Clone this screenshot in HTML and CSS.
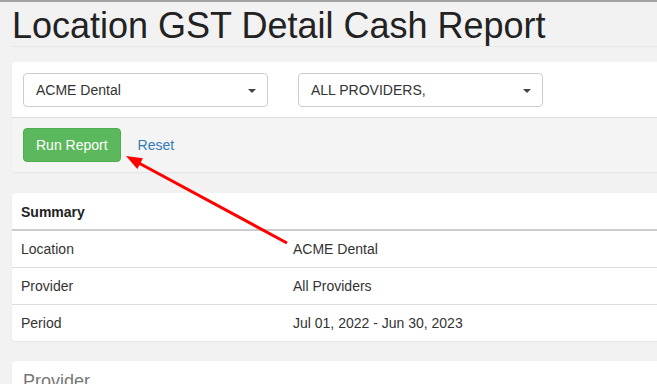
FILE: index.html
```html
<!DOCTYPE html>
<html lang="en">
<head>
    <meta charset="UTF-8">
    <meta name="viewport" content="width=device-width, initial-scale=1.0">
    <title>Location GST Detail Cash Report</title>
    <link rel="stylesheet" href="styles.css">
</head>
<body>
    <div class="page">
        <div class="page-header">
            <h1>Location GST Detail Cash Report</h1>
        </div>

        <div class="panel panel-filters">
            <div class="panel-body filters">
                <div class="select">
                    <span>ACME Dental</span>
                    <span class="caret"></span>
                </div>
                <div class="select">
                    <span>ALL PROVIDERS,</span>
                    <span class="caret"></span>
                </div>
            </div>
            <div class="panel-footer">
                <button class="btn-run">Run Report</button>
                <a href="#" class="reset">Reset</a>
            </div>
        </div>

        <div class="panel">
            <table class="summary">
                <thead>
                    <tr><th class="col-label">Summary</th><th></th></tr>
                </thead>
                <tbody>
                    <tr><td>Location</td><td>ACME Dental</td></tr>
                    <tr><td>Provider</td><td>All Providers</td></tr>
                    <tr><td>Period</td><td>Jul 01, 2022 - Jun 30, 2023</td></tr>
                </tbody>
            </table>
        </div>

        <div class="panel">
            <div class="panel-heading">Provider</div>
            <div class="panel-body">&nbsp;</div>
        </div>
    </div>

    <!-- annotation arrow -->
    <svg class="arrow" width="657" height="384" viewBox="0 0 657 384">
        <line x1="287" y1="243" x2="136" y2="161.5" stroke="#f00" stroke-width="3" />
        <polygon points="126,156 137.3,168.9 142.9,158.3" fill="#f00" />
    </svg>
</body>
</html>
```

FILE: styles.css
```css
html, body {
    margin: 0;
    height: 100%;
    overflow: hidden;
}
body {
    font-family: "Liberation Sans", Arial, sans-serif;
    font-size: 14px;
    line-height: 20px;
    color: #333;
    background: #f2f2f2;
    border-top: 2px solid #a3a3a3;
    position: relative;
}
.page {
    width: 720px;
    padding-left: 12px;
}
.page-header {
    padding-top: 4px;
    border-bottom: 1px solid #e8e8e8;
    margin-left: -2px;
    padding-left: 2px;
    margin-bottom: 15px;
}
h1 {
    margin: 0;
    font-size: 36px;
    font-weight: 400;
    line-height: 40px;
    color: #222;
}
.panel {
    background: #fff;
    border-radius: 4px;
    box-shadow: 0 1px 2px rgba(0, 0, 0, 0.06);
    margin-bottom: 20px;
    overflow: hidden;
}
.panel-filters {
    margin-bottom: 21px;
}
.panel-body {
    padding: 11px 11px 10px;
}
.filters {
    display: flex;
    gap: 30px;
}
.select {
    width: 245px;
    height: 34px;
    box-sizing: border-box;
    border: 1px solid #ccc;
    border-radius: 4px;
    padding: 0 11px 0 12px;
    display: flex;
    align-items: center;
    justify-content: space-between;
    color: #333;
}
.caret {
    width: 0;
    height: 0;
    border-left: 4px solid transparent;
    border-right: 4px solid transparent;
    border-top: 4px solid #444;
    margin-top: 1px;
}
.panel-footer {
    background: #f4f4f4;
    border-top: 1px solid #ddd;
    padding: 10px 11px;
    display: flex;
    align-items: center;
    gap: 17px;
}
.btn-run {
    font-family: inherit;
    font-size: 14px;
    height: 34px;
    padding: 0 12px;
    color: #fff;
    background: #5cb85c;
    border: 1px solid #4cae4c;
    border-radius: 4px;
}
.reset {
    color: #337ab7;
    text-decoration: none;
}
.summary {
    width: 100%;
    border-collapse: collapse;
}
.summary th,
.summary td {
    padding: 8px 9px;
    text-align: left;
}
.summary th {
    font-weight: bold;
    color: #222;
    border-bottom: 2px solid #ccc;
    padding-top: 9px;
    padding-bottom: 7px;
}
.col-label {
    width: 254px;
}
.summary tbody tr + tr td {
    border-top: 1px solid #ddd;
}
.panel-heading {
    font-size: 18px;
    color: #777;
    padding: 10px 11px;
}
.arrow {
    position: absolute;
    top: -2px;
    left: 0;
}
```
